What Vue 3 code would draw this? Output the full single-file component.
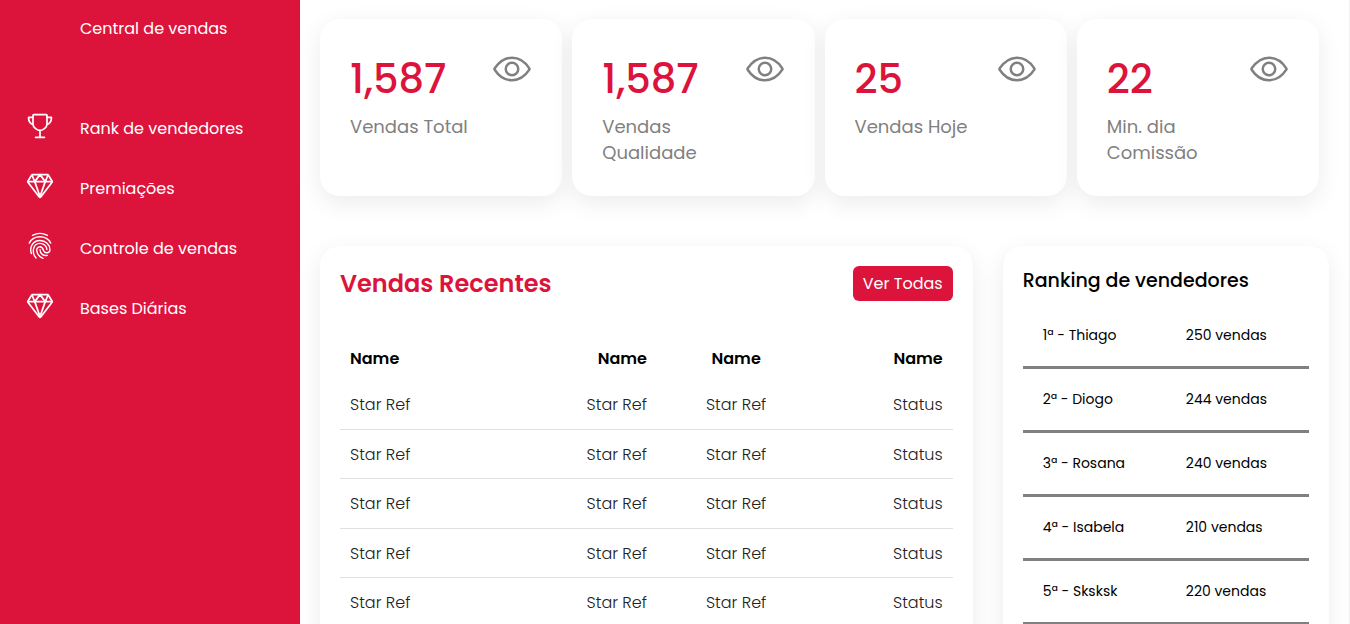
<script setup>
const menu = [
  { label: 'Rank de vendedores', icon: 'trophy' },
  { label: 'Premiações', icon: 'diamond' },
  { label: 'Controle de vendas', icon: 'finger' },
  { label: 'Bases Diárias', icon: 'diamond' },
]

const icons = {
  trophy: [
    'M176 464h160M256 464V336M384 224c0-50.64-.08-134.63-.12-160a16 16 0 00-16-16l-223.79.26a16 16 0 00-16 16c0 30.58-.13 129.17-.13 159.78 0 64.28 83 112 128 112S384 288.24 384 224z',
    'M128 96H48v16c0 55.22 33.55 112 80 112M384 96h80v16c0 55.22-33.55 112-80 112',
  ],
  diamond: [
    'M35.42 188.21l207.75 269.46a16.17 16.17 0 0025.66 0l207.75-269.46a16.52 16.52 0 00.95-18.75L407.06 55.71A16.22 16.22 0 00393.27 48H118.73a16.22 16.22 0 00-13.79 7.71L34.47 169.46a16.52 16.52 0 00.95 18.75z',
    'M48 176h416M400 64l-48 112-96-128M112 64l48 112 96-128M256 448l-96-272M256 448l96-272',
  ],
  finger: [
    'M120 62C205 16 305 16 391 62',
    'M60 202C98 130 170 88 256 88s158 42 196 114',
    'M98 394C58 276 126 154 256 154c104 0 182 78 182 170 0 66-90 74-112 24-16-36-20-78-70-78-40 0-66 34-58 80 10 62 50 106 112 132',
    'M184 476C104 392 118 208 256 208c72 0 126 52 126 114',
    'M256 326c4 74 60 116 134 102',
  ],
}

const cards = [
  { value: '1,587', label: 'Vendas Total' },
  { value: '1,587', label: 'Vendas Qualidade' },
  { value: '25', label: 'Vendas Hoje' },
  { value: '22', label: 'Min. dia Comissão' },
]

const sales = Array.from({ length: 5 }, () => ['Star Ref', 'Star Ref', 'Star Ref', 'Status'])

const ranking = [
  { name: '1ª - Thiago', total: '250 vendas' },
  { name: '2ª - Diogo', total: '244 vendas' },
  { name: '3ª - Rosana', total: '240 vendas' },
  { name: '4ª - Isabela', total: '210 vendas' },
  { name: '5ª - Sksksk', total: '220 vendas' },
]
</script>

<template>
  <div class="page">
    <nav class="sidebar">
      <a class="brand" href="#">Central de vendas</a>
      <ul class="menu">
        <li v-for="item in menu" :key="item.label">
          <a href="#">
            <svg class="menu-icon" :class="item.icon" viewBox="0 0 512 512" aria-hidden="true">
              <path v-for="d in icons[item.icon]" :key="d" :d="d" />
            </svg>
            <span>{{ item.label }}</span>
          </a>
        </li>
      </ul>
    </nav>

    <main class="main">
      <section class="cards">
        <article v-for="(card, i) in cards" :key="i" class="card">
          <div>
            <div class="value">{{ card.value }}</div>
            <div class="label">{{ card.label }}</div>
          </div>
          <svg class="eye" viewBox="0 0 512 512" aria-hidden="true">
            <path d="M255.66 112c-77.94 0-157.89 45.11-220.83 135.33a16 16 0 00-.27 17.77C82.92 340.8 161.8 400 255.66 400c92.84 0 173.34-59.38 221.79-135.25a16.14 16.14 0 000-17.47C428.89 172.28 347.8 112 255.66 112z" />
            <circle cx="256" cy="256" r="80" />
          </svg>
        </article>
      </section>

      <section class="details">
        <article class="panel">
          <header class="panel-head">
            <h2>Vendas Recentes</h2>
            <button type="button">Ver Todas</button>
          </header>
          <table class="sales">
            <thead>
              <tr>
                <th v-for="n in 4" :key="n" scope="col">Name</th>
              </tr>
            </thead>
            <tbody>
              <tr v-for="(row, r) in sales" :key="r">
                <td v-for="(cell, c) in row" :key="c">{{ cell }}</td>
              </tr>
            </tbody>
          </table>
        </article>

        <article class="panel">
          <h3>Ranking de vendedores</h3>
          <table class="ranking">
            <tbody>
              <tr v-for="row in ranking" :key="row.name">
                <td>{{ row.name }}</td>
                <td>{{ row.total }}</td>
              </tr>
            </tbody>
          </table>
        </article>
      </section>
    </main>
  </div>
</template>

<style>
body {
  margin: 0;
}
</style>

<style scoped>
.page {
  display: flex;
  height: 100vh;
  overflow: hidden;
  background: #fff;
  color: #000;
  font-family: Poppins, Inter, "Open Sans", sans-serif;
  font-size: 16px;
}

.page * {
  box-sizing: border-box;
}

.sidebar {
  flex: 0 0 300px;
  background: #dc143c;
}

.sidebar a {
  color: #fff;
  text-decoration: none;
}

.brand {
  display: block;
  padding-left: 80px;
  line-height: 58px;
}

.menu {
  list-style: none;
  margin: 41px 0 0;
  padding: 0;
}

.menu a {
  display: flex;
  align-items: flex-start;
  gap: 26px;
  padding-left: 26px;
  line-height: 60px;
}

.menu-icon {
  width: 28px;
  height: 28px;
  margin-top: 13px;
}

svg {
  flex: none;
  fill: none;
  stroke: #fff;
  stroke-width: 32;
  stroke-linecap: round;
  stroke-linejoin: round;
}

.finger {
  stroke-width: 26;
}

.main {
  flex: 1;
  min-width: 0;
  padding: 19px 20px;
  border-right: 1px solid #f1f1f1;
}

.cards {
  display: grid;
  grid-template-columns: repeat(4, 1fr);
  gap: 10px;
  margin-right: 10px;
}

.card,
.panel {
  background: #fff;
  border-radius: 20px;
  box-shadow: 0 7px 25px rgba(0, 0, 0, 0.08);
}

.card {
  display: flex;
  justify-content: space-between;
  min-height: 177px;
  padding: 30px;
}

.value {
  color: #dc143c;
  font-size: 40px;
  font-weight: 500;
  line-height: 60px;
}

.label {
  margin-top: 5px;
  color: #808080;
  font-size: 18px;
  line-height: 26px;
}

.eye {
  width: 40px;
  height: 40px;
  stroke: #808080;
}

.details {
  display: grid;
  grid-template-columns: 2fr 1fr;
  gap: 30px;
  margin-top: 50px;
}

.panel {
  min-height: 500px;
  padding: 20px;
}

.panel-head {
  display: flex;
  justify-content: space-between;
  align-items: flex-start;
}

h2,
h3 {
  margin: 0;
}

h2 {
  color: #dc143c;
  font-size: 24px;
  font-weight: 600;
  line-height: 36px;
}

button {
  height: 35px;
  padding: 0 10px;
  border: 0;
  border-radius: 6px;
  background: #dc143c;
  color: #fff;
  font: inherit;
}

h3 {
  font-size: 19px;
  font-weight: 500;
  line-height: 29px;
}

table {
  width: 100%;
  border-spacing: 0;
}

.sales {
  margin-top: 34px;
  border-collapse: collapse;
}

.sales th,
.sales td {
  padding: 1px 10px 0;
  text-align: left;
}

.sales th {
  height: 43px;
  font-weight: 600;
}

.sales td {
  height: 50px;
  border-bottom: 1px solid rgba(0, 0, 0, 0.12);
  color: #222;
  font-weight: 300;
}

.sales tr:nth-child(even) td {
  height: 49px;
}

.sales :is(th, td):nth-child(2),
.sales :is(th, td):nth-child(4) {
  text-align: right;
}

.sales :is(th, td):nth-child(3) {
  text-align: center;
}

.ranking {
  margin-top: 10px;
  table-layout: fixed;
}

.ranking td {
  height: 64px;
  padding: 0 0 0 20px;
  border-bottom: 3px solid #808080;
  font-size: 14px;
}
</style>
